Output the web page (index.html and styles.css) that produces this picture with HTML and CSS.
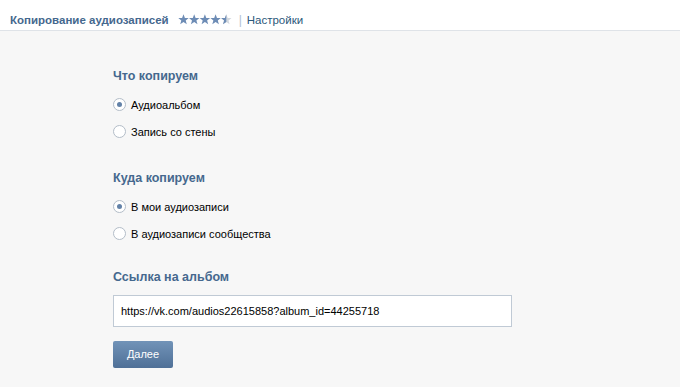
FILE: index.html
```html
<!DOCTYPE html>
<html lang="ru">
<head>
<meta charset="utf-8">
<link rel="stylesheet" href="styles.css">
</head>
<body>
<div class="header">
  <span class="app-title">Копирование аудиозаписей</span>
  <span class="stars">
    <svg width="54" height="11" viewBox="0 0 54 11">
      <defs>
        <path id="st" d="M5.5 0.3 L6.9 3.9 L10.7 4.0 L7.7 6.4 L8.8 10.2 L5.5 8.0 L2.2 10.2 L3.3 6.4 L0.3 4.0 L4.1 3.9 Z"/>
        <clipPath id="half"><rect x="0" y="0" width="5.5" height="11"/></clipPath>
      </defs>
      <use href="#st" x="0" fill="#6d8cb5"/>
      <use href="#st" x="10.7" fill="#6d8cb5"/>
      <use href="#st" x="21.4" fill="#6d8cb5"/>
      <use href="#st" x="32.1" fill="#6d8cb5"/>
      <use href="#st" x="42.8" fill="#d3d8de"/>
      <g transform="translate(42.8 0)"><use href="#st" fill="#6d8cb5" clip-path="url(#half)"/></g>
    </svg>
  </span>
  <span class="sep">|</span>
  <span class="settings">Настройки</span>
</div>
<div class="content">
  <div class="section">
    <div class="heading">Что копируем</div>
    <div class="radio-row"><span class="radio checked"></span><span class="label">Аудиоальбом</span></div>
    <div class="radio-row"><span class="radio"></span><span class="label">Запись со стены</span></div>
  </div>
  <div class="section">
    <div class="heading">Куда копируем</div>
    <div class="radio-row"><span class="radio checked"></span><span class="label">В мои аудиозаписи</span></div>
    <div class="radio-row"><span class="radio"></span><span class="label">В аудиозаписи сообщества</span></div>
  </div>
  <div class="section last">
    <div class="heading">Ссылка на альбом</div>
    <div class="input">https://vk.com/audios22615858?album_id=44255718</div>
    <div class="button">Далее</div>
  </div>
</div>
</body>
</html>
```
FILE: styles.css
```css
html, body {
  margin: 0;
  padding: 0;
}
body {
  background: #f7f7f7;
  font-family: "Liberation Sans", Arial, sans-serif;
  font-size: 11px;
  color: #000;
  width: 680px;
  height: 387px;
  overflow: hidden;
}
.header {
  height: 21px;
  background: #fff;
  border-bottom: 1px solid #dfe3e8;
  display: flex;
  align-items: center;
  padding-left: 10px;
  padding-top: 9px;
  box-sizing: content-box;
}
.app-title {
  font-weight: bold;
  color: #45688e;
  font-size: 11.5px;
}
.stars {
  display: flex;
  margin-left: 9px;
}
.sep {
  color: #b0bfd0;
  margin-left: 7px;
  font-size: 12px;
}
.settings {
  color: #2b587a;
  margin-left: 5px;
  font-size: 11.5px;
}
.content {
  padding: 37px 0 0 113px;
}
.section {
  margin-bottom: 25px;
}
.section + .section.last {
  margin-top: -3px;
}
.heading {
  font-weight: bold;
  color: #45688e;
  font-size: 12.5px;
  height: 16px;
  line-height: 16px;
  margin-bottom: 7px;
}
.radio-row {
  height: 27px;
  display: flex;
  align-items: center;
}
.radio {
  width: 11px;
  height: 11px;
  border: 1px solid #b3bdc8;
  border-radius: 50%;
  background: #fff;
  box-sizing: content-box;
  display: flex;
  align-items: center;
  justify-content: center;
  margin-right: 5px;
}
.radio.checked::after {
  content: "";
  width: 5px;
  height: 5px;
  border-radius: 50%;
  background: #6382a8;
}
.label {
  color: #000;
}
.last .heading {
  margin-bottom: 10px;
}
.input {
  width: 399px;
  height: 32px;
  box-sizing: border-box;
  border: 1px solid #c0cad5;
  background: #fff;
  padding-left: 7px;
  line-height: 30px;
  font-size: 11px;
}
.button {
  margin-top: 14px;
  width: 60px;
  height: 27px;
  border-radius: 2px;
  background: linear-gradient(#7193b8, #4f7097);
  color: #fff;
  text-align: center;
  line-height: 27px;
  font-size: 11px;
}
```
